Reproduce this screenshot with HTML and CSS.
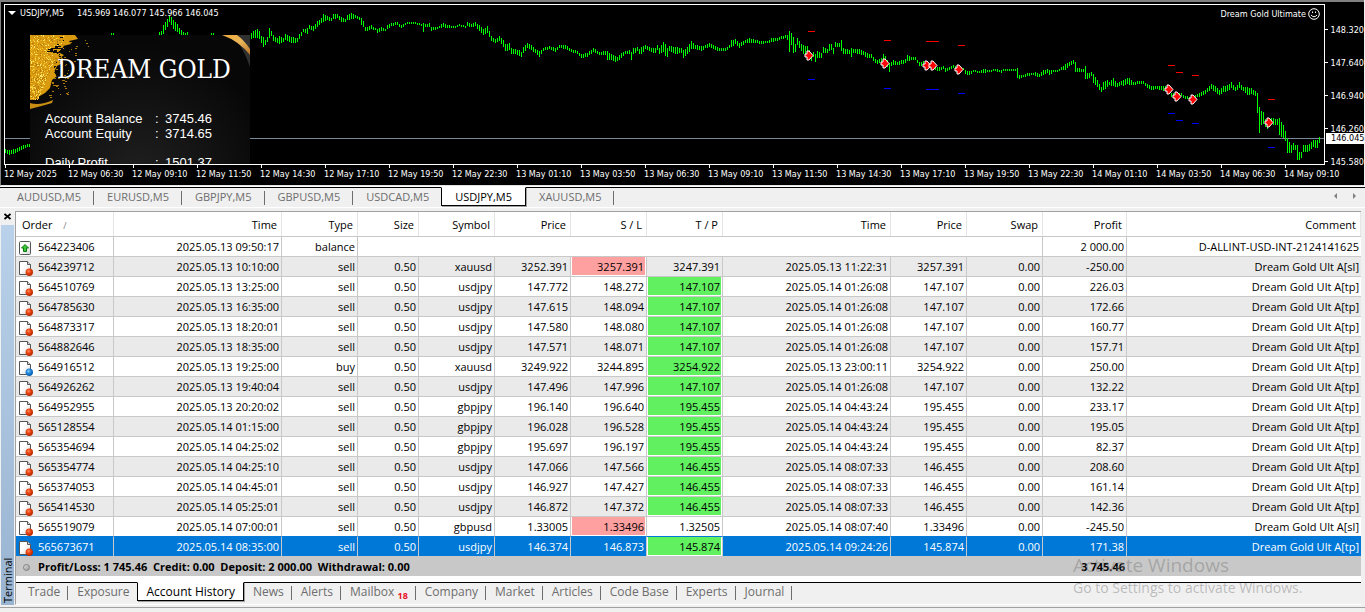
FILE: index.html
```html
<!DOCTYPE html>
<html lang="en">
<head>
    <meta charset="UTF-8">
    <meta name="viewport" content="width=device-width, initial-scale=1.0">
    <title>USDJPY,M5</title>
    <link rel="stylesheet" href="styles.css">
</head>
<body>
    <svg class="defs" width="0" height="0" aria-hidden="true">
        <defs>
            <linearGradient id="page" x1="0" y1="0" x2="1" y2="1">
                <stop offset="0.4" stop-color="#fff"/>
                <stop offset="1" stop-color="#d8d8d8"/>
            </linearGradient>
            <radialGradient id="redBall" cx="0.4" cy="0.35" r="0.6">
                <stop offset="0" stop-color="#ff8a5c"/>
                <stop offset="0.5" stop-color="#e8430f"/>
                <stop offset="1" stop-color="#b82a00"/>
            </radialGradient>
            <radialGradient id="blueBall" cx="0.4" cy="0.35" r="0.6">
                <stop offset="0" stop-color="#8fd0ff"/>
                <stop offset="0.5" stop-color="#1c86dd"/>
                <stop offset="1" stop-color="#0a5cab"/>
            </radialGradient>
            <linearGradient id="goldBand" x1="0" y1="0" x2="1" y2="1">
                <stop offset="0" stop-color="#f0a83a"/>
                <stop offset="0.5" stop-color="#e9b65a"/>
                <stop offset="1" stop-color="#b8722a"/>
            </linearGradient>
            <symbol id="icon-sell" viewBox="0 0 14 15">
                <path d="M.5.5h8l3 3v10H.5z" fill="url(#page)" stroke="#555"/>
                <path d="M8.5.5v3h3" fill="#ddd" stroke="#555"/>
                <circle cx="10.300" cy="11.300" r="3.700" fill="url(#redBall)"/>
            </symbol>
            <symbol id="icon-buy" viewBox="0 0 14 15">
                <path d="M.5.5h8l3 3v10H.5z" fill="url(#page)" stroke="#555"/>
                <path d="M8.5.5v3h3" fill="#ddd" stroke="#555"/>
                <circle cx="10.300" cy="11.300" r="3.700" fill="url(#blueBall)"/>
            </symbol>
            <symbol id="icon-balance" viewBox="0 0 14 15">
                <rect x=".5" y=".5" width="11" height="13" rx="1" fill="url(#page)" stroke="#555"/>
                <path d="M6 3.500l3.500 3.500h-2v3.500h-3V7h-2z" fill="#3cc43c" stroke="#0a7a0a"/>
            </symbol>
        </defs>
    </svg>

    <section class="chart">
        <div class="plot">
            <svg class="candles" id="candles"></svg>
            <div class="chart-title"><i class="arrow"></i><span>USDJPY,M5</span><span>145.969 146.077 145.966 146.045</span></div>
            <div class="expert">Dream Gold Ultimate
                <svg width="12" height="12" viewBox="0 0 12 12" fill="none" stroke="#fff">
                    <circle cx="6" cy="6" r="5.300"/>
                    <path d="M4.500 3.500v1.500M7.500 3.500v1.500M3 7q3 3.500 6 0"/>
                </svg>
            </div>
            <div class="panel">
                <svg class="gold" id="gold" width="220" height="129"></svg>
                <h1>DREAM GOLD</h1>
                <dl>
                    <dt>Account Balance</dt><dd>3745.46</dd>
                    <dt>Account Equity</dt><dd>3714.65</dd>
                    <dt class="gap">Daily Profit</dt><dd class="gap">1501.37</dd>
                </dl>
            </div>
        </div>
        <div class="prices">
            <span>148.320</span><span>147.640</span><span>146.940</span><span>146.260</span><span>145.580</span>
            <b class="current">146.045</b>
        </div>
        <div class="times" id="times"></div>
    </section>

    <nav class="tabs chart-tabs">
        <button>AUDUSD,M5</button>
        <button>EURUSD,M5</button>
        <button>GBPJPY,M5</button>
        <button>GBPUSD,M5</button>
        <button>USDCAD,M5</button>
        <button class="active">USDJPY,M5</button>
        <button>XAUUSD,M5</button>
        <span class="scroll"><i class="left"></i><i class="right"></i></span>
    </nav>

    <section class="terminal">
        <aside class="side">
            <button class="close" aria-label="Close">
                <svg width="7" height="7" viewBox="0 0 7 7"><path d="M.5 1l6 5M6.500 1l-6 5" stroke="#000" stroke-width="1.700"/></svg>
            </button>
            <div class="grip">Terminal</div>
        </aside>
        <div class="content">
            <table>
                <colgroup>
                    <col class="w-order"><col class="w-time"><col class="w-num"><col class="w-size"><col class="w-num"><col class="w-num"><col class="w-num"><col class="w-num"><col class="w-time"><col class="w-num"><col class="w-num"><col class="w-profit"><col>
                </colgroup>
                <thead>
                    <tr>
                        <th>Order <span class="sort">/</span></th>
                        <th>Time</th><th>Type</th><th>Size</th><th>Symbol</th><th>Price</th><th>S / L</th><th>T / P</th>
                        <th>Time</th><th>Price</th><th>Swap</th><th>Profit</th><th>Comment</th>
                    </tr>
                </thead>
                <tbody id="orders"></tbody>
                <tfoot>
                    <tr>
                        <td colspan="11"><span class="dot"></span>Profit/Loss: 1 745.46&nbsp; Credit: 0.00&nbsp; Deposit: 2 000.00&nbsp; Withdrawal: 0.00</td>
                        <td>3 745.46</td>
                        <td></td>
                    </tr>
                </tfoot>
            </table>
            <nav class="tabs terminal-tabs">
                <button>Trade</button>
                <button>Exposure</button>
                <button class="active">Account History</button>
                <button>News</button>
                <button>Alerts</button>
                <button>Mailbox <sub>18</sub></button>
                <button>Company</button>
                <button>Market</button>
                <button>Articles</button>
                <button>Code Base</button>
                <button>Experts</button>
                <button>Journal</button>
            </nav>
        </div>
    </section>

    <div class="watermark">
        <p class="big">Activate Windows</p>
        <p>Go to Settings to activate Windows.</p>
    </div>

    <script src="script.js"></script>
</body>
</html>
```
FILE: styles.css
```css
* {
    box-sizing: border-box;
}
body {
    margin: 0;
    background-color: #f0f0f0;
    font-family: "Open Sans", "Noto Sans", sans-serif;
    font-size: 11px;
    color: #000;
    overflow: hidden;
}
button {
    font: inherit;
    border: none;
    background: none;
    padding: 0;
}
.defs {
    position: absolute;
}

/* chart */
.chart {
    display: grid;
    grid-template-columns: 1fr 39px;
    grid-template-rows: 161px 20px;
    padding: 2px 0 0 3px;
    border-top: 2px solid #808080;
    border-left: 1px solid #808080;
    border-bottom: 1px solid #e3e3e3;
    margin-right: 1px;
    background-color: #000;
    color: #fff;
    font-family: "DejaVu Sans Condensed", "DejaVu Sans", sans-serif;
    font-size: 9px;
}
.plot {
    position: relative;
    border: 1px solid #fff;
    overflow: hidden;
}
.candles {
    position: absolute;
    inset: 0;
    width: 100%;
    height: 100%;
}
.chart-title {
    position: absolute;
    left: 3px;
    top: 2px;
    display: flex;
    align-items: center;
    line-height: 12px;
    white-space: nowrap;
}
.chart-title span {
    margin-right: 13px;
}
.arrow {
    border: 4px solid transparent;
    border-top-color: #fff;
    border-bottom: none;
    margin-right: 4px;
}
.expert {
    position: absolute;
    right: 4px;
    top: 3px;
    display: flex;
    gap: 2px;
    line-height: 12px;
}
.panel {
    position: absolute;
    left: 25px;
    top: 30px;
    width: 220px;
    height: 220px;
    background: radial-gradient(circle at 50% 65%, #202020, #070707 75%);
    color: #fff;
    font-family: "Liberation Sans", Arial, sans-serif;
}
.gold {
    position: absolute;
    left: 0;
    top: 0;
}
.panel h1 {
    position: relative;
    margin: 0;
    padding: 18px 0 22px 27px;
    font: 26px/32px "DejaVu Serif Condensed", "DejaVu Serif", serif;
    white-space: nowrap;
}
.panel dl {
    display: grid;
    grid-template-columns: 110px 1fr;
    margin: 0;
    padding: 4px 0 0 15px;
    font-size: 13px;
    line-height: 15px;
}
.panel dd {
    margin: 0;
}
.panel dd::before {
    content: ":";
    display: inline-block;
    width: 10px;
}
.panel .gap {
    padding-top: 14px;
}
.prices {
    position: relative;
    padding-top: 9px;
}
.prices span {
    display: flex;
    align-items: center;
    gap: 3px;
    height: 33px;
}
.prices span::before {
    content: "";
    width: 3px;
    height: 1px;
    background-color: #fff;
}
.prices .current {
    position: absolute;
    left: 1px;
    right: 0;
    top: 129px;
    padding-left: 5px;
    background-color: #fff;
    color: #000;
    font-weight: normal;
    line-height: 11px;
}
.times {
    grid-column: 1 / 3;
    display: flex;
    overflow: hidden;
    line-height: 12px;
}
.times span {
    flex: none;
    width: 64px;
    white-space: nowrap;
}
.times span::before {
    content: "";
    display: block;
    width: 1px;
    height: 3px;
    margin-left: 1px;
    background-color: #fff;
}

/* tab strips */
.tabs {
    display: flex;
    align-items: flex-start;
    border-top: 1px solid #000;
    color: #6d6d6d;
}
.tabs button {
    position: relative;
    color: inherit;
    white-space: nowrap;
    height: 19px;
    line-height: 17px;
    padding: 0 8px 2px 9px;
}
.tabs button::after {
    content: "";
    position: absolute;
    right: 0;
    top: 3px;
    width: 1px;
    height: 14px;
    background-color: #6d6d6d;
}
.tabs .active {
    margin: -1px 0 0 -1px;
    border: 1px solid #000;
    border-top-color: #fff;
    background-color: #fff;
    color: #000;
    box-shadow: 1px 1px 0 #a0a0a0;
}
.tabs .active::after {
    display: none;
}
.chart-tabs {
    margin-top: 1px;
    height: 21px;
    padding-left: 4px;
    border-bottom: 1px solid #fff;
    box-shadow: 0 -1px 0 #fff;
}
.chart-tabs button {
    padding: 0 13px 2px;
}
.scroll {
    display: flex;
    gap: 16px;
    margin: 5px 9px 0 auto;
}
.scroll i {
    border: 3px solid transparent;
}
.scroll .left {
    border-left: none;
    border-right-color: #808080;
}
.scroll .right {
    border-right: none;
    border-left-color: #808080;
}

/* terminal */
.terminal {
    display: flex;
    margin-top: 3px;
    padding-bottom: 2px;
    border-bottom: 1px solid #a0a0a0;
}
.side {
    display: flex;
    flex-direction: column;
    width: 15px;
    padding: 0 1px;
}
.close {
    display: flex;
    justify-content: center;
    padding-top: 2px;
    height: 14px;
}
.grip {
    flex: 1;
    writing-mode: vertical-rl;
    transform: rotate(180deg);
    padding-top: 2px;
    line-height: 13px;
    background: linear-gradient(#99b4d1, #b9d1ea);
}
.content {
    flex: 1;
    margin-right: 4px;
    border-top: 1px solid #a0a0a0;
    border-left: 1px solid #a0a0a0;
    border-bottom: 1px solid #fff;
}
table {
    width: 100%;
    table-layout: fixed;
    border-collapse: separate;
    border-spacing: 0;
    background-color: #fff;
    border-bottom: 6px solid #fff;
}
.w-order { width: 98px; }
.w-time { width: 168px; }
.w-num { width: 76px; }
.w-size { width: 61px; }
.w-profit { width: 84px; }
th,
td {
    text-align: right;
    white-space: nowrap;
    font-weight: normal;
    padding: 0 2px 0 0;
    overflow: hidden;
}
th {
    height: 24px;
    padding-right: 4px;
    border-right: 1px solid #e5e5e5;
}
th:first-child {
    text-align: left;
    padding-left: 6px;
}
.sort {
    margin-left: 8px;
    color: #808080;
    font-size: 9px;
}
td {
    height: 20px;
    line-height: 19px;
    border-right: 1px solid #c8c8c8;
    border-top: 1px solid #c8c8c8;
}
td:first-child {
    text-align: left;
    padding-left: 3px;
}
td:first-child svg {
    vertical-align: middle;
    margin-right: 5px;
}
td:last-child {
    border-right: none;
}
tbody tr:nth-child(even) {
    background-color: #eaeaea;
}
.sl,
.tp {
    box-shadow: inset 1px 0 0 #fff, inset -1px -1px 0 #fff;
}
.sl {
    background-color: #ffa0a0;
}
.tp {
    background-color: #60f060;
}
tbody tr.selected {
    background-color: #0078d7;
    color: #fff;
}
.selected td {
    border-top-color: #0078d7;
}
.selected .tp {
    color: #000;
}
tfoot td {
    background-color: #c8c8c8;
    border: none;
    font-weight: bold;
}
.dot {
    display: inline-block;
    width: 7px;
    height: 7px;
    margin: 0 8px 0 4px;
    border: 1px solid #808080;
    border-radius: 50%;
    background: linear-gradient(135deg, #ddd, #999);
}
.terminal-tabs {
    height: 22px;
    padding-left: 3px;
    font-size: 12px;
}
.terminal-tabs sub {
    color: #e81123;
    font-size: 9px;
    font-weight: bold;
    line-height: 0;
}
.watermark {
    position: absolute;
    left: 1073px;
    top: 553px;
    color: rgba(120, 120, 120, 0.45);
    font-size: 14px;
    line-height: 20px;
    pointer-events: none;
}
.watermark p {
    margin: 0;
}
.watermark .big {
    font-size: 19px;
    line-height: 25px;
}
```
FILE: script.js
```js
const orders = [
    ['564239712', '2025.05.13 10:10:00', 'sell', 'xauusd', '3252.391', '3257.391', '3247.391', '2025.05.13 11:22:31', '3257.391', '-250.00', 'sl'],
    ['564510769', '2025.05.13 13:25:00', 'sell', 'usdjpy', '147.772', '148.272', '147.107', '2025.05.14 01:26:08', '147.107', '226.03', 'tp'],
    ['564785630', '2025.05.13 16:35:00', 'sell', 'usdjpy', '147.615', '148.094', '147.107', '2025.05.14 01:26:08', '147.107', '172.66', 'tp'],
    ['564873317', '2025.05.13 18:20:01', 'sell', 'usdjpy', '147.580', '148.080', '147.107', '2025.05.14 01:26:08', '147.107', '160.77', 'tp'],
    ['564882646', '2025.05.13 18:35:00', 'sell', 'usdjpy', '147.571', '148.071', '147.107', '2025.05.14 01:26:08', '147.107', '157.71', 'tp'],
    ['564916512', '2025.05.13 19:25:00', 'buy', 'xauusd', '3249.922', '3244.895', '3254.922', '2025.05.13 23:00:11', '3254.922', '250.00', 'tp'],
    ['564926262', '2025.05.13 19:40:04', 'sell', 'usdjpy', '147.496', '147.996', '147.107', '2025.05.14 01:26:08', '147.107', '132.22', 'tp'],
    ['564952955', '2025.05.13 20:20:02', 'sell', 'gbpjpy', '196.140', '196.640', '195.455', '2025.05.14 04:43:24', '195.455', '233.17', 'tp'],
    ['565128554', '2025.05.14 01:15:00', 'sell', 'gbpjpy', '196.028', '196.528', '195.455', '2025.05.14 04:43:24', '195.455', '195.05', 'tp'],
    ['565354694', '2025.05.14 04:25:02', 'sell', 'gbpjpy', '195.697', '196.197', '195.455', '2025.05.14 04:43:24', '195.455', '82.37', 'tp'],
    ['565354774', '2025.05.14 04:25:10', 'sell', 'usdjpy', '147.066', '147.566', '146.455', '2025.05.14 08:07:33', '146.455', '208.60', 'tp'],
    ['565374053', '2025.05.14 04:45:01', 'sell', 'usdjpy', '146.927', '147.427', '146.455', '2025.05.14 08:07:33', '146.455', '161.14', 'tp'],
    ['565414530', '2025.05.14 05:25:01', 'sell', 'usdjpy', '146.872', '147.372', '146.455', '2025.05.14 08:07:33', '146.455', '142.36', 'tp'],
    ['565519079', '2025.05.14 07:00:01', 'sell', 'gbpusd', '1.33005', '1.33496', '1.32505', '2025.05.14 08:07:40', '1.33496', '-245.50', 'sl'],
    ['565673671', '2025.05.14 08:35:00', 'sell', 'usdjpy', '146.374', '146.873', '145.874', '2025.05.14 09:24:26', '145.874', '171.38', 'tp']
];

function icon(name) {
    return `<svg width="14" height="15"><use href="#icon-${name}"/></svg>`;
}

let rows = `<tr><td>${icon('balance')}564223406</td><td>2025.05.13 09:50:17</td><td>balance</td>
    <td colspan="8"></td><td>2 000.00</td><td>D-ALLINT-USD-INT-2124141625</td></tr>`;
orders.forEach(([id, open, type, symbol, price, sl, tp, close, closePrice, profit, hit], i) => {
    rows += `<tr class="${i === orders.length - 1 ? 'selected' : ''}">
        <td>${icon(type)}${id}</td><td>${open}</td><td>${type}</td><td>0.50</td><td>${symbol}</td><td>${price}</td>
        <td class="${hit === 'sl' ? 'sl' : ''}">${sl}</td><td class="${hit === 'tp' ? 'tp' : ''}">${tp}</td>
        <td>${close}</td><td>${closePrice}</td><td>0.00</td><td>${profit}</td><td>Dream Gold Ult A[${hit}]</td></tr>`;
});
document.getElementById('orders').innerHTML = rows;

const times = ['12 May 2025', '12 May 06:30', '12 May 09:10', '12 May 11:50', '12 May 14:30', '12 May 17:10', '12 May 19:50',
    '12 May 22:30', '13 May 01:10', '13 May 03:50', '13 May 06:30', '13 May 09:10', '13 May 11:50', '13 May 14:30',
    '13 May 17:10', '13 May 19:50', '13 May 22:30', '14 May 01:10', '14 May 03:50', '14 May 06:30', '14 May 09:10'];
document.getElementById('times').innerHTML = times.map(t => `<span>${t}</span>`).join('');

// bar, high, low; the bars in between are interpolated
const bars = `5,149,153 9,150,155 15,149,153 21,146,150 27,144,147 29,144,147 109,36,40 111,33,38 113,33,38 115,36,40
157,36,40 159,32,38 161,31,36 163,25,34 165,22,30 167,19,27 169,15,22 171,17,25 173,20,29 177,24,32 179,28,34 181,30,35 185,33,38 187,32,38 189,36,40
209,36,40 211,33,38 213,33,38 215,36,40 249,36,40
251,33,39 253,31,38 257,29,38 259,31,39 261,36,43 263,37,47 265,40,45 267,37,42 269,28,38 271,31,36 273,35,41 277,38,43 279,36,44
283,38,42 285,34,40 289,36,42 293,37,43 297,38,42 299,34,39 303,29,32 307,28,34 309,25,29 313,26,31 317,21,27 321,18,23
323,14,22 327,16,20 331,18,21 333,14,19 337,14,18 341,17,22 345,19,22 347,15,20 351,13,19 355,15,18 359,17,20 361,18,25
363,21,27 365,27,31 369,26,30 371,25,29 375,28,30 377,29,33 381,27,31 385,29,31 387,25,29 391,23,26 397,22,25 401,25,28
407,22,24 415,22,24 421,24,26 423,23,32 425,24,27 429,23,27 431,27,31 437,27,29 443,23,27 447,25,28 455,26,28 459,24,26
465,26,28 467,22,26 471,24,27 475,22,26 479,25,31 483,29,35 487,26,33 491,36,41 495,39,43 499,36,41 503,40,47 505,44,51
509,43,50 511,48,54 515,49,54 519,50,56 521,52,57 523,47,53 527,43,48 531,45,50 535,49,53 539,51,57 543,48,51 549,46,49
555,48,52 559,45,48 565,45,49 571,49,52 577,51,54 581,54,58 587,53,57 593,48,52 599,52,55 605,51,55 607,51,60 611,54,60
615,56,62 617,57,61 621,53,58 625,51,54 629,50,54 631,52,60 633,48,54 637,47,51 639,49,54 641,47,54 645,45,49 651,48,52
655,48,53 657,45,50 659,48,54 663,42,52 665,44,56 667,48,57 669,46,51 675,47,54 681,48,53 683,50,58 687,47,54 691,41,49
695,45,49 701,46,51 705,45,48 709,43,47 715,46,50 719,48,51 725,48,51 729,45,48 731,40,47 735,39,44 739,43,48 745,40,43
749,38,43 755,40,43 761,41,44 767,41,43 771,38,42 777,38,41 781,36,39 785,35,38 787,35,40 789,31,52 791,33,45 793,37,53
795,44,52 797,38,45 801,44,51 803,45,54 807,46,54 809,50,56 811,54,61 813,52,57 815,54,62 817,51,58 821,53,58 823,47,53
827,49,53 829,44,51 831,44,50 833,48,54 835,42,47 839,43,47 841,40,51 843,48,54 849,50,54 851,48,57 853,49,53 859,49,54
863,51,55 867,53,58 871,54,58 873,57,61 877,60,64 881,58,62 883,54,59 885,56,61 887,60,67 889,63,72 891,62,66 893,60,65
897,62,65 901,60,64 905,59,63 907,55,61 911,57,60 915,57,60 919,62,66 923,61,66 927,63,67 933,65,69 937,67,71 941,67,70
943,66,69 945,68,72 949,67,70 953,65,68 957,66,69 963,68,70 965,70,74 969,71,75 973,70,72 979,71,73 983,69,73 989,70,72
995,69,71 1001,70,73 1003,69,71 1009,69,71 1015,69,71 1017,68,78 1019,75,79 1023,75,77 1027,73,76 1033,73,75 1035,72,76
1039,74,77 1043,70,75 1047,69,73 1049,70,75 1053,70,72 1057,70,72 1061,67,70 1065,64,70 1069,62,66 1073,60,64 1075,62,72
1077,68,72 1083,69,72 1085,66,79 1087,73,79 1091,72,76 1093,74,83 1097,80,87 1101,87,92 1103,82,90 1107,80,87 1109,82,85
1113,78,86 1117,83,87 1121,81,85 1123,80,86 1127,78,84 1129,78,85 1133,82,85 1137,81,84 1143,81,84 1147,84,88 1151,86,90
1157,86,89 1163,86,91 1167,86,90 1171,93,97 1177,93,97 1181,93,96 1185,96,99 1191,97,100 1197,94,97 1201,92,96 1205,90,94
1211,84,89 1215,86,92 1219,90,95 1223,86,92 1227,85,91 1231,82,88 1235,87,91 1239,82,88 1243,87,91 1247,87,95 1251,88,94
1255,91,96 1257,93,113 1259,107,133 1261,111,125 1263,112,124 1265,119,127 1267,122,129 1271,118,122 1273,118,125
1277,119,125 1279,118,135 1283,125,138 1285,131,141 1287,138,153 1291,145,153 1293,143,150 1295,145,150 1297,145,160
1299,152,160 1301,152,158 1303,145,152 1307,145,152 1311,142,149 1313,140,147 1317,140,148 1319,137,143`
    .split(/\s+/).map(b => b.split(',').map(Number));

let d = '';
for (let i = 0; i < bars.length - 1; i++) {
    const [x1, h1, l1] = bars[i];
    const [x2, h2, l2] = bars[i + 1];
    for (let x = x1; x < x2; x += 2) {
        const t = (x - x1) / (x2 - x1);
        d += `M${x} ${Math.round(h1 + (h2 - h1) * t)}V${Math.round(l1 + (l2 - l1) * t)}`;
    }
}
d += 'M1319 137V143';

// trades: marker x, y, stop line x, y, length
const trades = [[808, 55, 808, 31, 7], [884, 63, 884, 40, 7], [926, 65, 926, 41, 13], [932, 65, 926, 41, 13], [958, 69, 958, 45, 7],
    [1168, 89, 1168, 65, 7], [1176, 96, 1176, 72, 7], [1192, 99, 1192, 75, 7], [1268, 122, 1268, 99, 7]];
let marks = '';
trades.forEach(([x, y, lx, ly, w]) => {
    marks += `<path d="M${lx} ${ly + 0.5}h${w}" stroke="#f00"/><path d="M${lx} ${ly + 48.5}h${w}" stroke="#00f"/>`;
});
trades.forEach(([x, y]) => {
    marks += `<path d="M${x - 3} ${y - 1}h2v-3h2l4 4.500l-4 4.500h-2v-3h-2z" fill="#f00" stroke="#fff"/>`;
});
document.getElementById('candles').innerHTML =
    `<path d="M0 133.500h2000" stroke="#778899"/>
    <g transform="translate(-5 -5)"><path transform="translate(.5 0)" d="${d}" stroke="#0f0"/>${marks}</g>`;

// gold leaf in the corner of the panel
let seed = 7;
function rand() {
    seed = (seed * 16807) % 2147483647;
    return seed / 2147483647;
}
const shades = ['#f7c92e', '#ffe56b', '#b87a06', '#c48a10', '#e0a312', '#e8b020'];
let gold = '<path d="M0 0H45L48 4L39 6L41 9L33 11L36 14L28 17L34 20L29 24L33 28L27 31L24 37L27 41L22 45L20 53L15 58L8 62L0 65Z" fill="#d99a10"/>' +
    '<path d="M0 68Q10 71 23 65L22 68Q12 71 0 74Z" fill="#c98d12"/>';
for (let i = 0; i < 1000; i++) {
    const y = rand() * 64;
    const edge = y < 20 ? 44 - y * 0.7 : 33 - (y - 20) * 0.45;
    const x = rand() * Math.max(edge - 6, 5);
    gold += `<rect x="${Math.round(x)}" y="${Math.round(y)}" width="1" height="1" fill="${shades[i % 6]}"/>`;
}
for (let i = 0; i < 110; i++) {
    const y = rand() * 62;
    const x = 28 + rand() * rand() * 40 - y * 0.15;
    gold += `<rect x="${Math.round(x)}" y="${Math.round(y)}" width="${1 + i % 2}" height="1" fill="${i % 3 ? '#a8780f' : '#0b0b0b'}"/>`;
}
for (let i = 0; i < 40; i++) {
    const x = 17 + rand() * 18;
    gold += `<rect x="${Math.round(x)}" y="${Math.round(10 + rand() * 7)}" width="3" height="1" fill="#0b0b0b"/>`;
}
gold += '<path d="M203 0H220V32Q214 14 203 0Z" fill="#303030"/><path d="M192 0H207Q214 5 220 14V20Q209 6 192 0Z" fill="url(#goldBand)"/>';
document.getElementById('gold').innerHTML = gold;
```
